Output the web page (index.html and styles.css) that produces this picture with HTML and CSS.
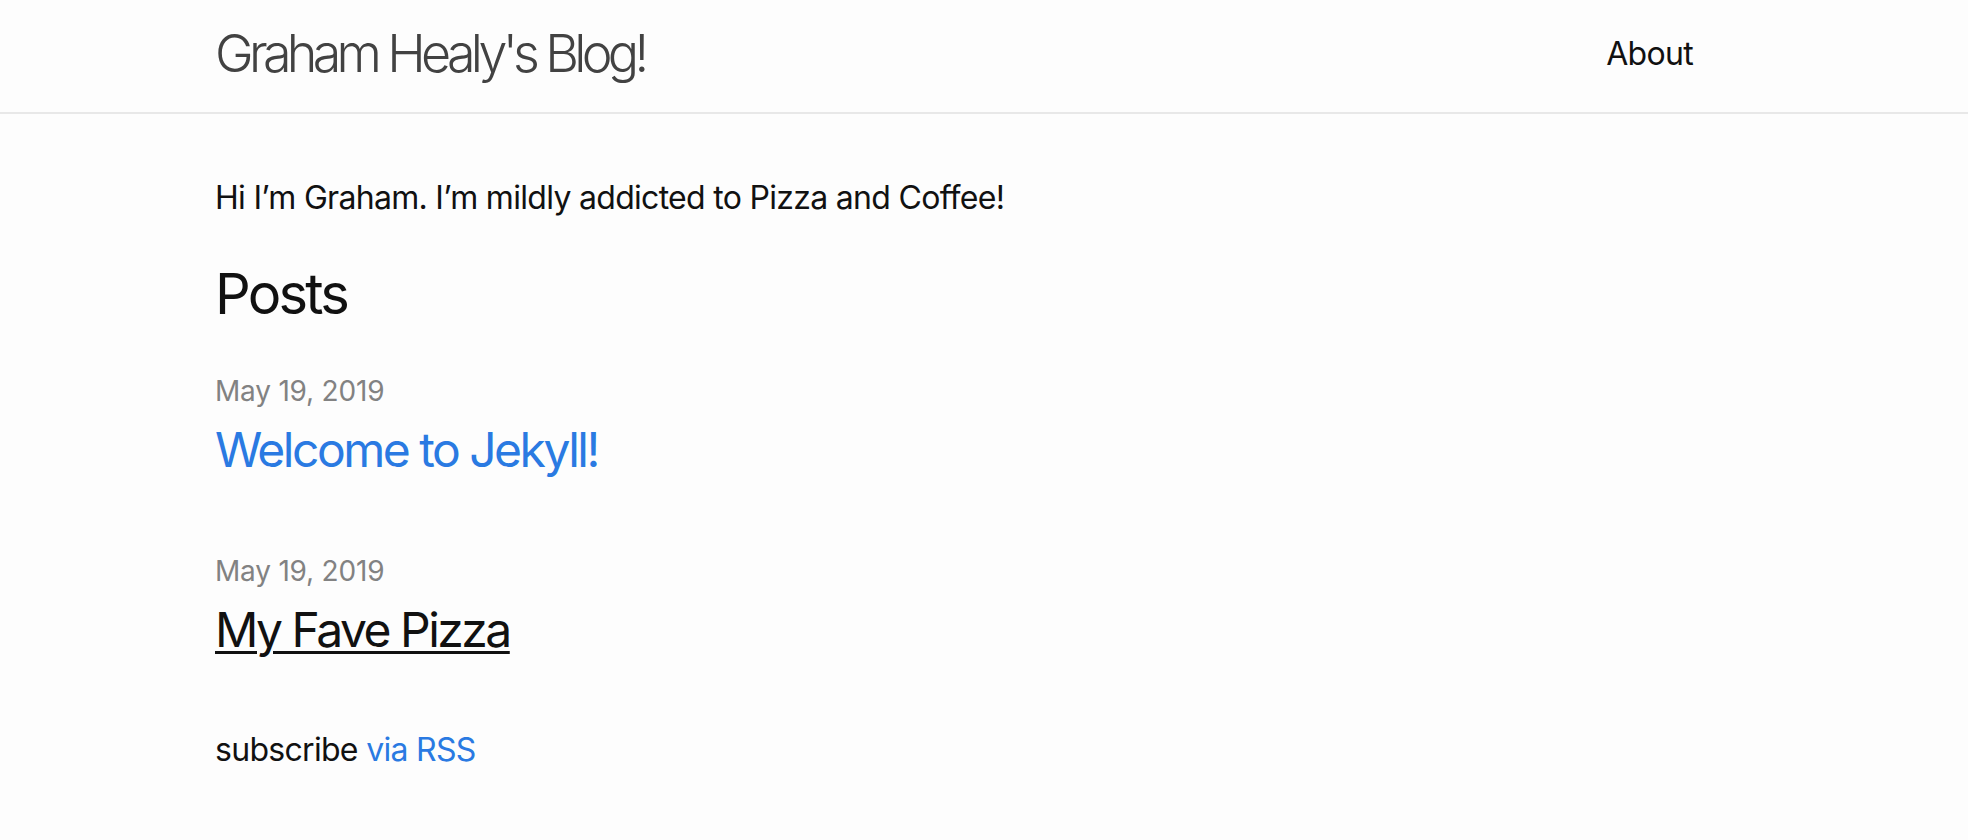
FILE: index.html
```html
<!DOCTYPE html>
<html lang="en">
<head>
<meta charset="utf-8">
<title>Graham Healy's Blog!</title>
<link rel="stylesheet" href="styles.css">
</head>
<body>
<header class="site-header">
  <div class="wrapper header-row">
    <a class="site-title" href="#">Graham Healy's Blog!</a>
    <nav class="site-nav">
      <a class="page-link" href="#">About</a>
    </nav>
  </div>
</header>
<main class="page-content">
  <div class="wrapper">
    <p class="intro">Hi I’m Graham. I’m mildly addicted to Pizza and Coffee!</p>
    <h2 class="post-list-heading">Posts</h2>
    <ul class="post-list">
      <li>
        <span class="post-meta">May 19, 2019</span>
        <h3><a class="post-link" href="#">Welcome to Jekyll!</a></h3>
      </li>
      <li>
        <span class="post-meta">May 19, 2019</span>
        <h3><a class="post-link visited" href="#">My Fave Pizza</a></h3>
      </li>
    </ul>
    <p class="rss-subscribe">subscribe <a href="#">via RSS</a></p>
  </div>
</main>
</body>
</html>
```

FILE: styles.css
```css
* { box-sizing: border-box; }

html, body {
  margin: 0;
  padding: 0;
}

body {
  background: #fdfdfd;
  color: #111111;
  font-family: Inter, "Noto Sans", "Liberation Sans", sans-serif;
  font-size: 32px;
  line-height: 1.5;
  font-weight: 400;
  letter-spacing: -0.7px;
}

a {
  color: #2a7ae2;
  text-decoration: none;
}

.wrapper {
  width: 1478px;
  margin-left: 215px;
}

.site-header {
  border-bottom: 2px solid #e8e8e8;
  min-height: 114px;
}

.header-row {
  display: flex;
  justify-content: space-between;
  align-items: flex-start;
}

.site-title {
  font-size: 52px;
  font-weight: 300;
  line-height: 108px;
  letter-spacing: -4.7px;
  color: #424242;
}

.site-nav {
  line-height: 108px;
}

.page-link {
  color: #111111;
  line-height: 1.5;
}

.page-content {
  padding: 60px 0;
}

.intro {
  margin: 0 0 30px;
}

.post-list-heading {
  font-size: 56px;
  font-weight: 400;
  line-height: 1.5;
  letter-spacing: -2.8px;
  margin: 0 0 30px;
}

.post-list {
  list-style: none;
  margin: 0 0 30px;
  padding: 0;
}

.post-list li {
  margin-bottom: 60px;
}

.post-meta {
  font-size: 28px;
  letter-spacing: -0.2px;
  color: #828282;
}

.post-list h3 {
  font-size: 48px;
  font-weight: 400;
  line-height: 1.5;
  letter-spacing: -2.5px;
  margin: 0 0 30px;
}

.post-link {
  display: block;
}

.post-link.visited {
  color: #111111;
  text-decoration: underline;
  text-decoration-thickness: 3px;
  text-underline-offset: 4px;
}

.rss-subscribe {
  margin: 0 0 30px;
}
```
